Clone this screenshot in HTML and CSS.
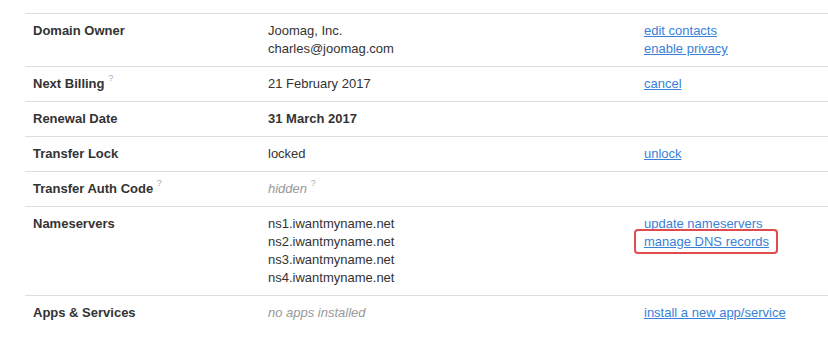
FILE: index.html
```html
<!DOCTYPE html>
<html lang="en">
  <head>
    <meta charset="UTF-8" />
    <meta name="viewport" content="width=device-width, initial-scale=1.0" />
    <title>domain details</title>
    <link rel="stylesheet" href="styles.css">
  </head>
  <body>
    <div class="page">
      <table class="domainTable">
        <tr>
          <th>Domain Owner</th>
          <td>Joomag, Inc.<br />charles@joomag.com</td>
          <td class="actions">
            <a href="#">edit contacts</a><br />
            <a href="#">enable privacy</a>
          </td>
        </tr>
        <tr>
          <th>Next Billing <sup class="hint">?</sup></th>
          <td>21 February 2017</td>
          <td class="actions"><a href="#">cancel</a></td>
        </tr>
        <tr>
          <th>Renewal Date</th>
          <td><strong>31 March 2017</strong></td>
          <td class="actions"></td>
        </tr>
        <tr>
          <th>Transfer Lock</th>
          <td>locked</td>
          <td class="actions"><a href="#">unlock</a></td>
        </tr>
        <tr>
          <th>Transfer Auth Code <sup class="hint">?</sup></th>
          <td><span class="muted">hidden</span> <sup class="hint">?</sup></td>
          <td class="actions"></td>
        </tr>
        <tr>
          <th>Nameservers</th>
          <td>
            ns1.iwantmyname.net<br />
            ns2.iwantmyname.net<br />
            ns3.iwantmyname.net<br />
            ns4.iwantmyname.net
          </td>
          <td class="actions">
            <a href="#">update nameservers</a><br />
            <a href="#" class="highlight">manage DNS records</a>
          </td>
        </tr>
        <tr class="lastRow">
          <th>Apps &amp; Services</th>
          <td><span class="muted">no apps installed</span></td>
          <td class="actions"><a href="#">install a new app/service</a></td>
        </tr>
      </table>
    </div>
  </body>
</html>
```

FILE: styles.css
```css
* {
  padding: 0;
  margin: 0;
  box-sizing: border-box;
}
body {
  background: #fff;
  color: #333;
  font-family: "Liberation Sans", Arial, Helvetica, sans-serif;
  font-size: 13px;
  line-height: 18px;
}
.page {
  padding: 13px 0 0 25px;
}
.domainTable {
  width: 803px;
  border-collapse: collapse;
  table-layout: fixed;
}
.domainTable th,
.domainTable td {
  text-align: left;
  vertical-align: top;
  padding: 8px 8px 8px 8px;
  border-top: 1px solid #ddd;
}
.domainTable th {
  width: 235px;
  font-weight: 700;
}
.domainTable td {
  width: 376px;
}
.domainTable td.actions {
  width: 192px;
}
.domainTable strong {
  font-weight: 700;
}
.muted {
  color: #999;
  font-style: italic;
}
.hint {
  color: #aab;
  font-size: 9px;
  font-weight: 400;
  font-style: normal;
  vertical-align: top;
  line-height: 12px;
  position: relative;
  top: -3px;
}
.actions a {
  color: #3a7fd8;
  text-decoration: underline;
}
.highlight {
  display: inline-block;
  position: relative;
}
.highlight::after {
  content: "";
  position: absolute;
  top: -4px;
  bottom: -3px;
  left: -10px;
  right: -9px;
  border: 2px solid #e04b4f;
  border-radius: 4px;
}
```
